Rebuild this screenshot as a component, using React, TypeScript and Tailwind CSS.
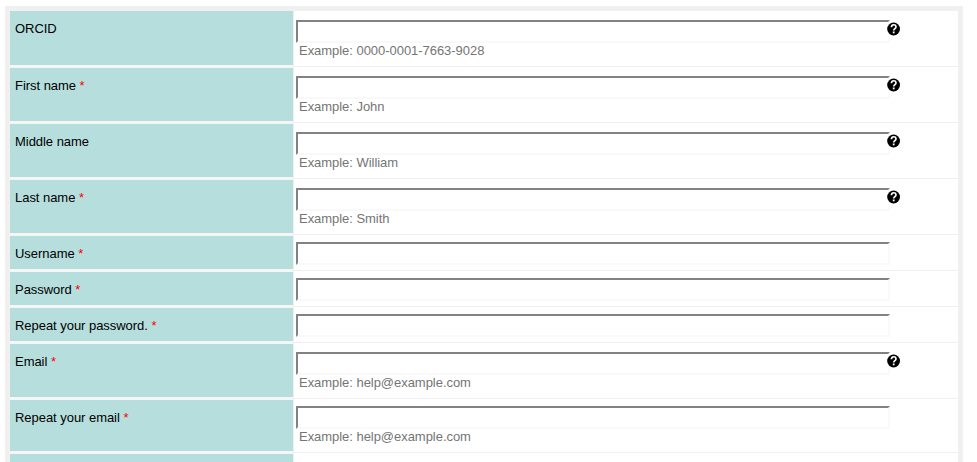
type Field = {
  label: string;
  required?: boolean;
  example?: string;
  help?: boolean;
};

const fields: Field[] = [
  { label: "ORCID", example: "0000-0001-7663-9028", help: true },
  { label: "First name", required: true, example: "John", help: true },
  { label: "Middle name", example: "William", help: true },
  { label: "Last name", required: true, example: "Smith", help: true },
  { label: "Username", required: true },
  { label: "Password", required: true },
  { label: "Repeat your password.", required: true },
  { label: "Email", required: true, example: "help@example.com", help: true },
  { label: "Repeat your email", required: true, example: "help@example.com" },
];

function HelpIcon() {
  return (
    <svg className="-ml-[3px] mt-[2px] h-[14px] w-[14px] shrink-0" viewBox="0 0 14 14" role="img" aria-label="Help">
      <circle cx="6.6" cy="7" r="6.4" fill="#000" />
      <path d="M4.4 5.3C4.5 3.6 5.3 2.8 6.7 2.8C8.1 2.8 9 3.6 9 4.9C9 6.6 6.7 6.7 6.7 8.5" fill="none" stroke="#fff" strokeWidth="1.6" />
      <rect x="5.8" y="9.5" width="1.8" height="1.8" fill="#fff" />
    </svg>
  );
}

function Row({ field, first }: { field: Field; first: boolean }) {
  const height = field.help ? "h-[56px]" : field.example ? "h-[54px]" : "h-[36px]";
  return (
    <div className={`flex shrink-0 ${height}`}>
      <div
        className={`w-[283px] shrink-0 border-b-2 border-[#f6f6f6] bg-[#b6dedd] pt-[10px] pl-[5px] text-black ${
          first ? "" : "border-t"
        }`}
      >
        <label className="block leading-[15px]">
          {field.label}
          {field.required && <span className="text-[#ff0000]"> *</span>}
        </label>
      </div>
      <div className={`flex-1 border-b border-l border-[#f0f0f0] pl-[2px] ${field.help ? "pt-[9px]" : "pt-[7px]"}`}>
        <div className="flex h-[23px] items-start">
          <input
            type="text"
            aria-label={field.label}
            className="block h-[23px] w-[594px] border-2 border-t-[#828282] border-r-[#f9f9f9] border-b-[#f9f9f9] border-l-[#828282] bg-white px-1 outline-none"
          />
          {field.help && <HelpIcon />}
        </div>
        {field.example && <p className="pl-[3px] leading-[15px] text-[#757575]">Example: {field.example}</p>}
      </div>
    </div>
  );
}

export default function App() {
  return (
    <div className="h-[462px] w-[977px] overflow-hidden bg-white pt-[6px] pl-[5px] font-['Liberation_Sans',Arial,sans-serif] text-[13px] tracking-[-0.04px]">
      <form className="flex h-[456px] w-[958px] flex-col overflow-hidden border-x-[5px] border-t-[5px] border-[#f0f0f0] bg-white">
        {fields.map((field, i) => (
          <Row key={field.label} field={field} first={i === 0} />
        ))}
        <div className="flex h-[36px] shrink-0">
          <div className="w-[283px] border-t border-[#f6f6f6] bg-[#b6dedd]" />
          <div className="flex-1 border-l border-[#f0f0f0]" />
        </div>
      </form>
    </div>
  );
}
